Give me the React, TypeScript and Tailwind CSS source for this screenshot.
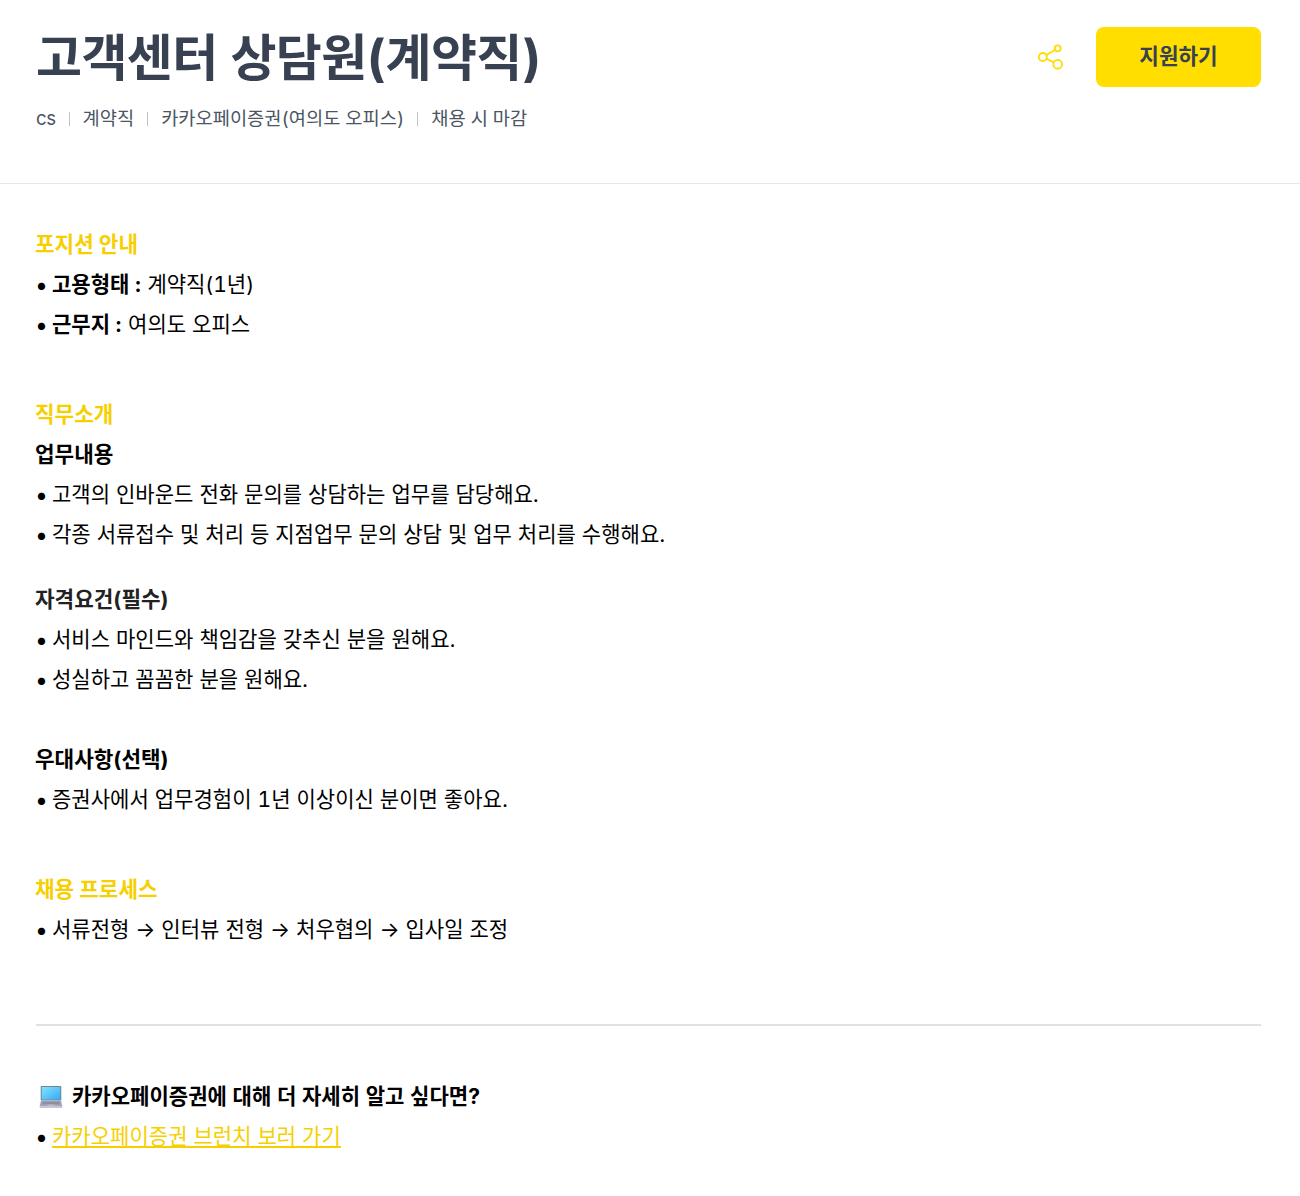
import type { ReactNode } from 'react';

const sectionTitle = 'text-[#f7cf00] font-bold text-[21.3px] leading-[38px] pb-[2px] -ml-px';
const subTitle = 'font-bold text-[21.3px] leading-[38px] pb-[2px] -ml-px';
const divider = 'mx-[13px] w-px h-[14px] bg-[#bfc3ca]';

function ShareIcon() {
    return (
        <svg width="28" height="28" viewBox="0 0 28 28" fill="none" stroke="#ffdc00" strokeWidth="1.8">
            <circle cx="20.7" cy="5.3" r="3" />
            <circle cx="5.8" cy="14" r="4" />
            <circle cx="20.7" cy="21.3" r="4.4" />
            <path d="M18.2 6.8 9.3 12" />
            <path d="M9.5 15.8l7.3 3.6" />
        </svg>
    );
}

function LaptopEmoji() {
    return (
        <svg width="24" height="24" viewBox="0 0 24 24">
            <defs>
                <linearGradient id="screen" x1="0" y1="0" x2="1" y2="1">
                    <stop offset="0" stopColor="#7fe4ff" />
                    <stop offset="1" stopColor="#3aa8f2" />
                </linearGradient>
            </defs>
            <rect x="1.7" y="1" width="20.6" height="14.5" rx="0.8" fill="#75858f" />
            <rect x="2.7" y="2" width="18.6" height="12.6" fill="url(#screen)" />
            <path d="M2 15.5h20l1.3 5.5H0.7z" fill="#a5a5bd" />
            <path d="M3.5 16.8h17l0.5 2.4H3z" fill="#8d8da8" />
            <rect x="0.7" y="21" width="22.6" height="2" fill="#c6c6d6" />
            <rect x="8.5" y="19.5" width="7" height="1.5" fill="#b8b8ca" />
        </svg>
    );
}

function Bullet({ children }: { children: ReactNode }) {
    return (
        <li className="flex">
            <span className="w-[17px] -ml-px shrink-0 text-[23px]">•</span>
            <span>{children}</span>
        </li>
    );
}

export default function App() {
    return (
        <div className="bg-white font-['Inter','Noto_Sans_CJK_KR',sans-serif]">
            <header className="border-b border-[#e5e7eb] pl-[36px] pr-[39px] h-[184px] flex justify-between">
                <div className="tabular-nums">
                    <h1 className="mt-[23px] text-[50px] leading-[70px] font-bold tracking-[-0.6px] text-[#374151]">
                        고객센터 상담원(계약직)
                    </h1>
                    <div className="mt-[12px] flex items-center text-[18.7px] leading-[28px] text-[#4b5563]">
                        <span className="tracking-[-0.5px]">cs</span>
                        <span className={divider} />
                        <span>계약직</span>
                        <span className={divider} />
                        <span>카카오페이증권(여의도 오피스)</span>
                        <span className={divider} />
                        <span>채용 시 마감</span>
                    </div>
                </div>
                <div className="flex items-start pt-[27px]">
                    <button className="mt-[16px] mr-[31px]">
                        <ShareIcon />
                    </button>
                    <button className="w-[165px] h-[60px] rounded-[8px] bg-[#ffde00] text-[21.3px] font-bold text-[#374151]">
                        지원하기
                    </button>
                </div>
            </header>

            <main className="pl-[36px] pr-[39px] pt-[41px] pb-[39px] text-[21.06px] leading-[40px] text-black">
                <h3 className={sectionTitle}>포지션 안내</h3>
                <ul>
                    <Bullet>
                        <b>고용형태 :</b> 계약직(<span className="tabular-nums">1</span>년)
                    </Bullet>
                    <Bullet>
                        <b>근무지 :</b> 여의도 오피스
                    </Bullet>
                </ul>

                <h3 className={`${sectionTitle} mt-[50px]`}>직무소개</h3>
                <h4 className={subTitle}>업무내용</h4>
                <ul>
                    <Bullet>고객의 인바운드 전화 문의를 상담하는 업무를 담당해요.</Bullet>
                    <Bullet>각종 서류접수 및 처리 등 지점업무 문의 상담 및 업무 처리를 수행해요.</Bullet>
                </ul>

                <h4 className={`${subTitle} mt-[25px] text-[#222222]`}>자격요건(필수)</h4>
                <ul>
                    <Bullet>서비스 마인드와 책임감을 갖추신 분을 원해요.</Bullet>
                    <Bullet>성실하고 꼼꼼한 분을 원해요.</Bullet>
                </ul>

                <h4 className={`${subTitle} mt-[40px]`}>우대사항(선택)</h4>
                <ul>
                    <Bullet>
                        증권사에서 업무경험이 <span className="tabular-nums">1</span>년 이상이신 분이면 좋아요.
                    </Bullet>
                </ul>

                <h3 className={`${sectionTitle} mt-[50px]`}>채용 프로세스</h3>
                <ul>
                    <Bullet>서류전형 → 인터뷰 전형 → 처우협의 → 입사일 조정</Bullet>
                </ul>

                <hr className="mt-[74px] border-t-2 border-[#e0e1e5]" />

                <div className="mt-[51px] flex items-center font-bold tabular-nums">
                    <span className="ml-[3px] mr-[9px]">
                        <LaptopEmoji />
                    </span>
                    카카오페이증권에 대해 더 자세히 알고 싶다면?
                </div>
                <ul>
                    <Bullet>
                        <a href="#" className="text-[#f7cf00] underline">
                            카카오페이증권 브런치 보러 가기
                        </a>
                    </Bullet>
                </ul>
            </main>
        </div>
    );
}
